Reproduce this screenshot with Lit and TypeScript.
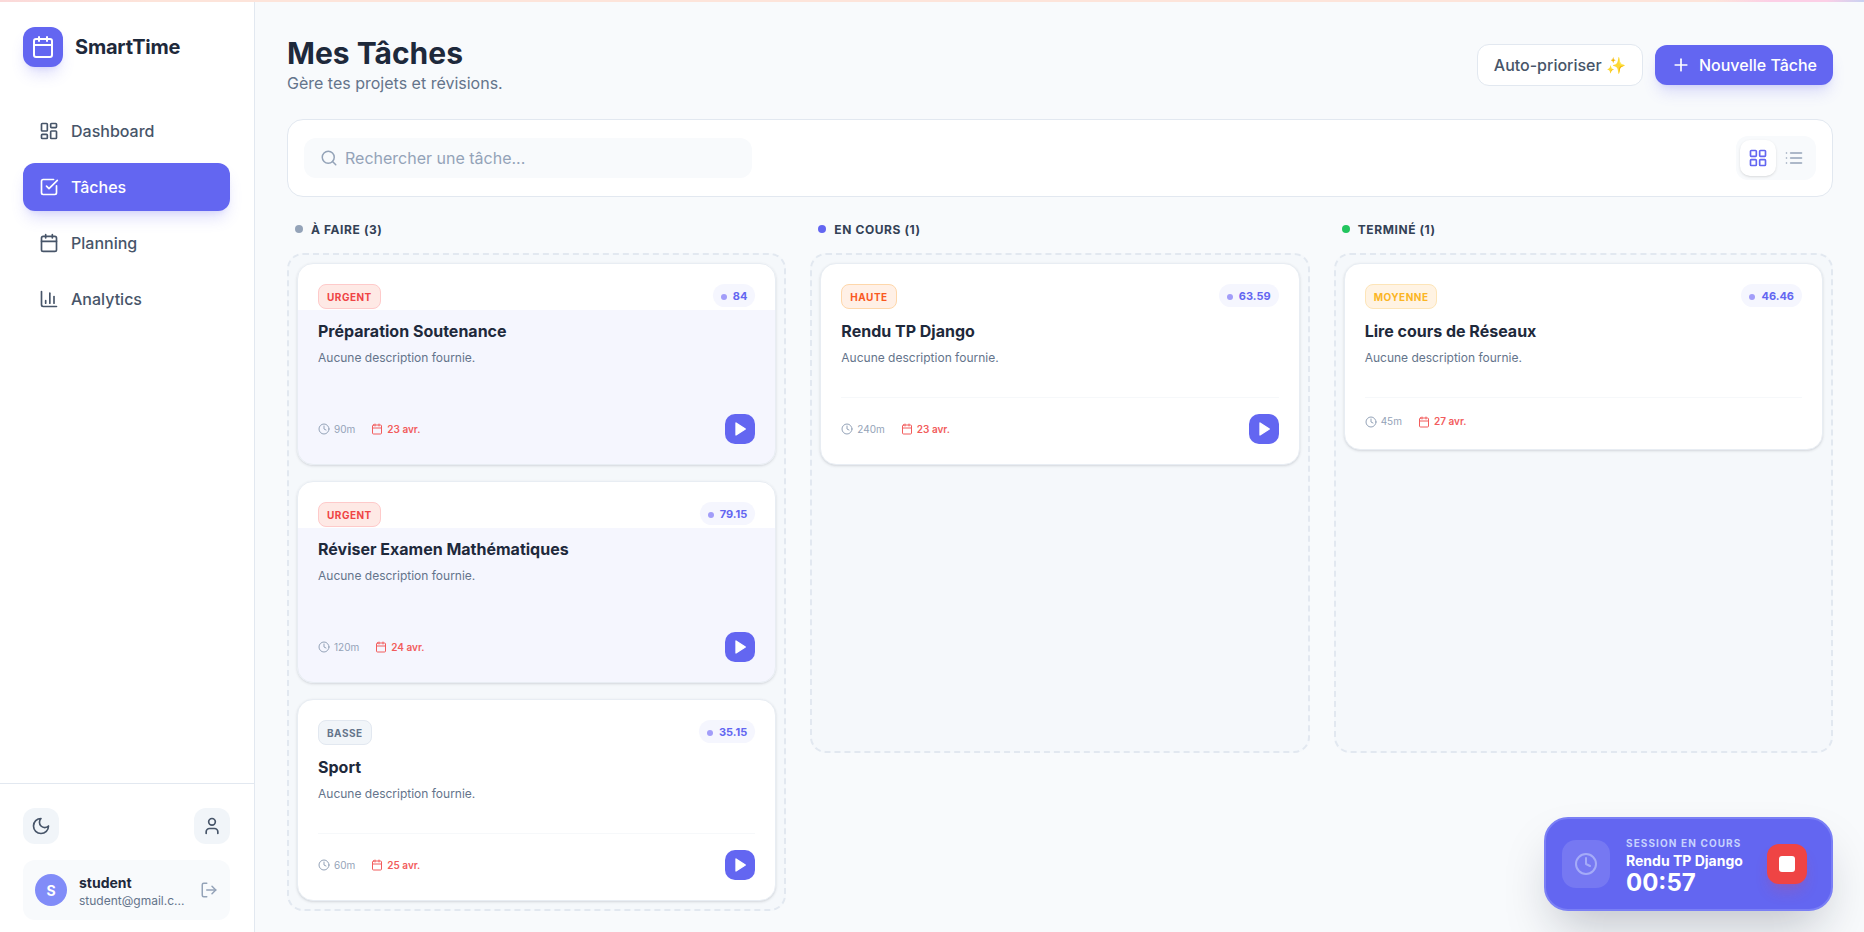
import { LitElement, html, css, svg } from "lit";
import { customElement } from "lit/decorators.js";
import { classMap } from "lit/directives/class-map.js";

const icon = (paths: unknown, size = 20, cls = "") => html`
  <svg class="ico ${cls}" width=${size} height=${size} viewBox="0 0 24 24" fill="none" stroke="currentColor"
    stroke-width="2" stroke-linecap="round" stroke-linejoin="round">${paths}</svg>
`;

const icons = {
  calendar: svg`<path d="M8 2v4"/><path d="M16 2v4"/><rect x="3" y="4" width="18" height="18" rx="2"/><path d="M3 10h18"/>`,
  dashboard: svg`<rect x="3" y="3" width="7" height="9" rx="1"/><rect x="14" y="3" width="7" height="5" rx="1"/><rect x="14" y="12" width="7" height="9" rx="1"/><rect x="3" y="16" width="7" height="5" rx="1"/>`,
  check: svg`<path d="M21 10.5V19a2 2 0 0 1-2 2H5a2 2 0 0 1-2-2V5a2 2 0 0 1 2-2h12.5"/><path d="m9 11 3 3L22 4"/>`,
  chart: svg`<path d="M3 3v16a2 2 0 0 0 2 2h16"/><path d="M18 17V9"/><path d="M13 17V5"/><path d="M8 17v-3"/>`,
  moon: svg`<path d="M12 3a6 6 0 0 0 9 9 9 9 0 1 1-9-9Z"/>`,
  user: svg`<path d="M19 21v-2a4 4 0 0 0-4-4H9a4 4 0 0 0-4 4v2"/><circle cx="12" cy="7" r="4"/>`,
  logout: svg`<path d="M9 21H5a2 2 0 0 1-2-2V5a2 2 0 0 1 2-2h4"/><path d="m16 17 5-5-5-5"/><path d="M21 12H9"/>`,
  search: svg`<circle cx="11" cy="11" r="8"/><path d="m21 21-4.3-4.3"/>`,
  plus: svg`<path d="M5 12h14"/><path d="M12 5v14"/>`,
  grid: svg`<rect x="3" y="3" width="7" height="7" rx="1"/><rect x="14" y="3" width="7" height="7" rx="1"/><rect x="14" y="14" width="7" height="7" rx="1"/><rect x="3" y="14" width="7" height="7" rx="1"/>`,
  list: svg`<path d="M3 12h.01"/><path d="M3 18h.01"/><path d="M3 6h.01"/><path d="M8 12h13"/><path d="M8 18h13"/><path d="M8 6h13"/>`,
  clock: svg`<circle cx="12" cy="12" r="10"/><polyline points="12 6 12 12 16 14"/>`,
  play: svg`<polygon points="6 3 20 12 6 21 6 3" fill="currentColor"/>`,
};

type Task = {
  prio: string;
  level: string;
  score: string;
  title: string;
  mins: number;
  due: string;
  tinted?: boolean;
  noPlay?: boolean;
};

const columns: { name: string; dot: string; tasks: Task[] }[] = [
  {
    name: "À faire (3)",
    dot: "#94a3b8",
    tasks: [
      { prio: "Urgent", level: "urgent", score: "84", title: "Préparation Soutenance", mins: 90, due: "23 avr.", tinted: true },
      { prio: "Urgent", level: "urgent", score: "79.15", title: "Réviser Examen Mathématiques", mins: 120, due: "24 avr.", tinted: true },
      { prio: "Basse", level: "basse", score: "35.15", title: "Sport", mins: 60, due: "25 avr." },
    ],
  },
  {
    name: "En cours (1)",
    dot: "#6366f1",
    tasks: [{ prio: "Haute", level: "haute", score: "63.59", title: "Rendu TP Django", mins: 240, due: "23 avr." }],
  },
  {
    name: "Terminé (1)",
    dot: "#22c55e",
    tasks: [{ prio: "Moyenne", level: "moyenne", score: "46.46", title: "Lire cours de Réseaux", mins: 45, due: "27 avr.", noPlay: true }],
  },
];

const nav = [
  { label: "Dashboard", ico: icons.dashboard },
  { label: "Tâches", ico: icons.check, active: true },
  { label: "Planning", ico: icons.calendar },
  { label: "Analytics", ico: icons.chart },
];

@customElement("app-root")
export class AppRoot extends LitElement {
  static override styles = css`
    :host {
      display: flex;
      flex-direction: column;
      height: 100vh;
      overflow: hidden;
      position: relative;
      font-family: Inter, "Liberation Sans", sans-serif;
      color: #1e293b;
      background: #f8fafc;
    }
    * {
      box-sizing: border-box;
    }
    .ico {
      display: block;
      flex: none;
    }

    .strip {
      height: 2px;
      flex: none;
      background: linear-gradient(90deg, #fbd9d9 0, #fde4da 8%, #fde4da 92%, #fccfe6 95%, #fccfe6 98%, #c9d2f2 100%);
    }
    .shell {
      flex: 1;
      display: flex;
      min-height: 0;
    }

    .sidebar {
      width: 255px;
      flex: none;
      display: flex;
      flex-direction: column;
      background: #fff;
      border-right: 1px solid #e2e8f0;
    }
    .brand {
      display: flex;
      align-items: center;
      gap: 12px;
      padding: 25px 24px 0 23px;
    }
    .brand-mark {
      width: 40px;
      height: 40px;
      border-radius: 12px;
      background: #6366f1;
      color: #fff;
      display: flex;
      align-items: center;
      justify-content: center;
      box-shadow: 0 10px 15px -3px rgba(99, 102, 241, 0.2), 0 4px 6px -4px rgba(99, 102, 241, 0.2);
    }
    .brand-name {
      font-size: 20px;
      font-weight: 700;
      letter-spacing: -0.01em;
    }
    .nav {
      display: flex;
      flex-direction: column;
      gap: 8px;
      padding: 40px 24px 0 23px;
      flex: 1;
    }
    .nav-item {
      height: 48px;
      display: flex;
      align-items: center;
      gap: 12px;
      padding-left: 16px;
      border-radius: 12px;
      color: #475569;
      font-size: 16px;
      font-weight: 500;
    }
    .nav-item.active {
      background: #6366f1;
      color: #fff;
      box-shadow: 0 10px 15px -3px rgba(99, 102, 241, 0.2), 0 4px 6px -4px rgba(99, 102, 241, 0.2);
    }
    .side-foot {
      border-top: 1px solid #e2e8f0;
      padding: 24px 24px 12px 23px;
    }
    .side-btns {
      display: flex;
      justify-content: space-between;
      margin-bottom: 16px;
    }
    .side-btn {
      width: 36px;
      height: 36px;
      border-radius: 12px;
      background: #f1f5f9;
      color: #475569;
      display: flex;
      align-items: center;
      justify-content: center;
    }
    .user {
      height: 60px;
      border-radius: 12px;
      background: #f8fafc;
      display: flex;
      align-items: center;
      gap: 12px;
      padding: 0 12px;
    }
    .avatar {
      width: 32px;
      height: 32px;
      border-radius: 50%;
      background: #818cf8;
      color: #fff;
      font-size: 14px;
      font-weight: 700;
      display: flex;
      align-items: center;
      justify-content: center;
      flex: none;
    }
    .user-text {
      flex: 1;
      min-width: 0;
      padding-top: 2px;
    }
    .user-name {
      font-size: 14px;
      line-height: 20px;
      font-weight: 700;
    }
    .user-mail {
      font-size: 12px;
      line-height: 16px;
      color: #64748b;
      white-space: nowrap;
    }
    .user .ico {
      color: #94a3b8;
    }

    .main {
      flex: 1;
      min-width: 0;
      padding: 33px 31px 0 32px;
    }
    .head {
      display: flex;
      align-items: center;
      justify-content: space-between;
      margin-bottom: 24px;
    }
    h1 {
      margin: 0;
      font-size: 30px;
      line-height: 36px;
      font-weight: 700;
    }
    .sub {
      font-size: 16px;
      line-height: 24px;
      color: #64748b;
    }
    .actions {
      display: flex;
      align-items: center;
      gap: 12px;
    }
    .btn {
      font: inherit;
      font-size: 16px;
      font-weight: 500;
      line-height: 24px;
      border-radius: 12px;
      display: flex;
      align-items: center;
    }
    .btn-ghost {
      background: #fff;
      color: #475569;
      border: 1px solid #e2e8f0;
      padding: 8px 16px;
    }
    .btn-primary {
      background: #6366f1;
      color: #fff;
      border: 0;
      padding: 8px 16px;
      gap: 8px;
      box-shadow: 0 10px 15px -3px rgba(99, 102, 241, 0.2), 0 4px 6px -4px rgba(99, 102, 241, 0.2);
    }

    .toolbar {
      height: 78px;
      background: #fff;
      border: 1px solid #e2e8f0;
      border-radius: 16px;
      padding: 0 16px;
      display: flex;
      align-items: center;
      justify-content: space-between;
      margin-bottom: 24px;
    }
    .search {
      width: 448px;
      height: 40px;
      border-radius: 12px;
      background: #f8fafc;
      display: flex;
      align-items: center;
      gap: 7px;
      padding-left: 16px;
      color: #94a3b8;
    }
    .search input {
      flex: 1;
      min-width: 0;
      border: 0;
      outline: 0;
      background: none;
      font: inherit;
      font-size: 16px;
      padding: 0;
    }
    .search input::placeholder {
      color: #94a3b8;
      opacity: 1;
    }
    .toggle {
      display: flex;
      padding: 4px;
      background: #f8fafc;
      border-radius: 12px;
    }
    .toggle-btn {
      width: 36px;
      height: 36px;
      border-radius: 10px;
      display: flex;
      align-items: center;
      justify-content: center;
      color: #94a3b8;
    }
    .toggle-btn.on {
      background: #fff;
      color: #6366f1;
      box-shadow: 0 1px 3px rgba(0, 0, 0, 0.1), 0 1px 2px -1px rgba(0, 0, 0, 0.1);
    }

    .board {
      display: grid;
      grid-template-columns: repeat(3, minmax(0, 1fr));
      gap: 24px;
      align-items: start;
    }
    .col-head {
      display: flex;
      align-items: center;
      gap: 8px;
      padding-left: 8px;
      height: 16px;
      margin-bottom: 16px;
      font-size: 12px;
      font-weight: 700;
      letter-spacing: 0.05em;
      text-transform: uppercase;
      color: #334155;
    }
    .dot {
      width: 8px;
      height: 8px;
      border-radius: 50%;
    }
    .zone {
      min-height: 500px;
      display: flex;
      flex-direction: column;
      gap: 16px;
      padding: 8px;
      border: 2px dashed #e2e8f0;
      border-radius: 16px;
      background: #f5f8fb;
    }

    .card {
      background: #fff;
      border: 1px solid #e8edf3;
      border-radius: 16px;
      padding: 20px;
      box-shadow: 0 1px 3px rgba(15, 23, 42, 0.12), 0 1px 2px -1px rgba(15, 23, 42, 0.1);
    }
    .card.tinted {
      background: linear-gradient(#fff 46px, #f5f6fe 46px);
    }
    .card-top {
      display: flex;
      align-items: flex-start;
      justify-content: space-between;
      margin-bottom: 10px;
    }
    .badge {
      font-size: 10px;
      line-height: 15px;
      font-weight: 700;
      letter-spacing: 0.05em;
      text-transform: uppercase;
      padding: 5px 8px 3px;
      border: 1px solid;
      border-radius: 8px;
    }
    .badge.urgent {
      color: #ef4444;
      background: #fee9e5;
      border-color: #fecaca;
    }
    .badge.haute {
      color: #f9591f;
      background: #fff0e6;
      border-color: #fed7aa;
    }
    .badge.moyenne {
      color: #fbb524;
      background: #fff3e3;
      border-color: #fde5b8;
    }
    .badge.basse {
      color: #64748b;
      background: #f1f5f9;
      border-color: #e2e8f0;
    }
    .score {
      display: flex;
      align-items: center;
      gap: 6px;
      padding: 5px 8px 3px;
      border-radius: 999px;
      background: #f5f6fe;
      font-size: 11px;
      line-height: 15px;
      font-weight: 700;
      color: #6366f1;
    }
    .score i {
      width: 6px;
      height: 6px;
      border-radius: 50%;
      background: #a29df9;
    }
    .title {
      font-size: 16px;
      line-height: 24px;
      font-weight: 700;
      margin-bottom: 7px;
    }
    .desc {
      font-size: 12px;
      line-height: 16px;
      min-height: 32px;
      margin-bottom: 15px;
      color: #64748b;
    }
    .card-foot {
      display: flex;
      align-items: center;
      justify-content: space-between;
      border-top: 1px solid #f6f8fa;
      padding-top: 16px;
    }
    .card.tinted .card-foot {
      border-top-color: transparent;
    }
    .meta {
      display: flex;
      align-items: center;
      gap: 16px;
      font-size: 10px;
      line-height: 15px;
    }
    .meta span {
      display: flex;
      align-items: center;
      gap: 4px;
    }
    .mins {
      color: #94a3b8;
    }
    .due {
      color: #f25c5c;
      font-weight: 600;
    }
    .play {
      width: 30px;
      height: 30px;
      border-radius: 10px;
      background: #6366f1;
      color: #fff;
      display: flex;
      align-items: center;
      justify-content: center;
    }

    .session {
      position: absolute;
      right: 31px;
      bottom: 21px;
      width: 289px;
      height: 94px;
      border: 2px solid #7a7ff5;
      border-radius: 24px;
      background: #6366f1;
      color: #fff;
      display: flex;
      align-items: center;
      gap: 16px;
      padding: 0 24px 0 16px;
      box-shadow: 0 25px 50px -12px rgba(15, 23, 42, 0.25);
    }
    .session-ico {
      width: 48px;
      height: 48px;
      border-radius: 14px;
      background: rgba(255, 255, 255, 0.12);
      color: #a5abf8;
      display: flex;
      align-items: center;
      justify-content: center;
      flex: none;
    }
    .session-text {
      flex: 1;
      min-width: 0;
      padding-top: 3px;
    }
    .session-label {
      font-size: 10px;
      line-height: 14px;
      font-weight: 700;
      letter-spacing: 0.11em;
      color: #c7d2fe;
      white-space: nowrap;
    }
    .session-name {
      font-size: 14px;
      line-height: 20px;
      font-weight: 700;
      margin-top: 1px;
    }
    .session-time {
      font-size: 24px;
      line-height: 24px;
      font-weight: 700;
    }
    .stop {
      width: 40px;
      height: 40px;
      border-radius: 12px;
      background: #ef4444;
      display: flex;
      align-items: center;
      justify-content: center;
      flex: none;
      box-shadow: 0 10px 15px -3px rgba(239, 68, 68, 0.2), 0 4px 6px -4px rgba(239, 68, 68, 0.2);
    }
    .stop i {
      width: 16px;
      height: 16px;
      border-radius: 3px;
      background: #fff;
    }
  `;

  private renderTask(t: Task) {
    return html`
      <div class=${classMap({ card: true, tinted: !!t.tinted })}>
        <div class="card-top">
          <span class="badge ${t.level}">${t.prio}</span>
          <span class="score"><i></i>${t.score}</span>
        </div>
        <div class="title">${t.title}</div>
        <div class="desc">Aucune description fournie.</div>
        <div class="card-foot">
          <div class="meta">
            <span class="mins">${icon(icons.clock, 12)}${t.mins}m</span>
            <span class="due">${icon(icons.calendar, 12)}${t.due}</span>
          </div>
          ${t.noPlay ? "" : html`<div class="play">${icon(icons.play, 16)}</div>`}
        </div>
      </div>
    `;
  }

  override render() {
    return html`
      <div class="strip"></div>
      <div class="shell">
        <aside class="sidebar">
          <div class="brand">
            <div class="brand-mark">${icon(icons.calendar, 24)}</div>
            <div class="brand-name">SmartTime</div>
          </div>
          <nav class="nav">
            ${nav.map(
              (n) => html`
                <div class=${classMap({ "nav-item": true, active: !!n.active })}>${icon(n.ico)}${n.label}</div>
              `
            )}
          </nav>
          <div class="side-foot">
            <div class="side-btns">
              <div class="side-btn">${icon(icons.moon)}</div>
              <div class="side-btn">${icon(icons.user)}</div>
            </div>
            <div class="user">
              <div class="avatar">S</div>
              <div class="user-text">
                <div class="user-name">student</div>
                <div class="user-mail">student@gmail.c...</div>
              </div>
              ${icon(icons.logout, 18)}
            </div>
          </div>
        </aside>
        <main class="main">
          <header class="head">
            <div>
              <h1>Mes Tâches</h1>
              <div class="sub">Gère tes projets et révisions.</div>
            </div>
            <div class="actions">
              <button class="btn btn-ghost">Auto-prioriser ✨</button>
              <button class="btn btn-primary">${icon(icons.plus)}Nouvelle Tâche</button>
            </div>
          </header>
          <div class="toolbar">
            <label class="search">
              ${icon(icons.search, 18)}
              <input placeholder="Rechercher une tâche..." />
            </label>
            <div class="toggle">
              <div class="toggle-btn on">${icon(icons.grid)}</div>
              <div class="toggle-btn">${icon(icons.list)}</div>
            </div>
          </div>
          <div class="board">
            ${columns.map(
              (c) => html`
                <section>
                  <div class="col-head"><span class="dot" style="background:${c.dot}"></span>${c.name}</div>
                  <div class="zone">${c.tasks.map((t) => this.renderTask(t))}</div>
                </section>
              `
            )}
          </div>
        </main>
      </div>
      <div class="session">
        <div class="session-ico">${icon(icons.clock, 24)}</div>
        <div class="session-text">
          <div class="session-label">SESSION EN COURS</div>
          <div class="session-name">Rendu TP Django</div>
          <div class="session-time">00:57</div>
        </div>
        <div class="stop"><i></i></div>
      </div>
    `;
  }
}
